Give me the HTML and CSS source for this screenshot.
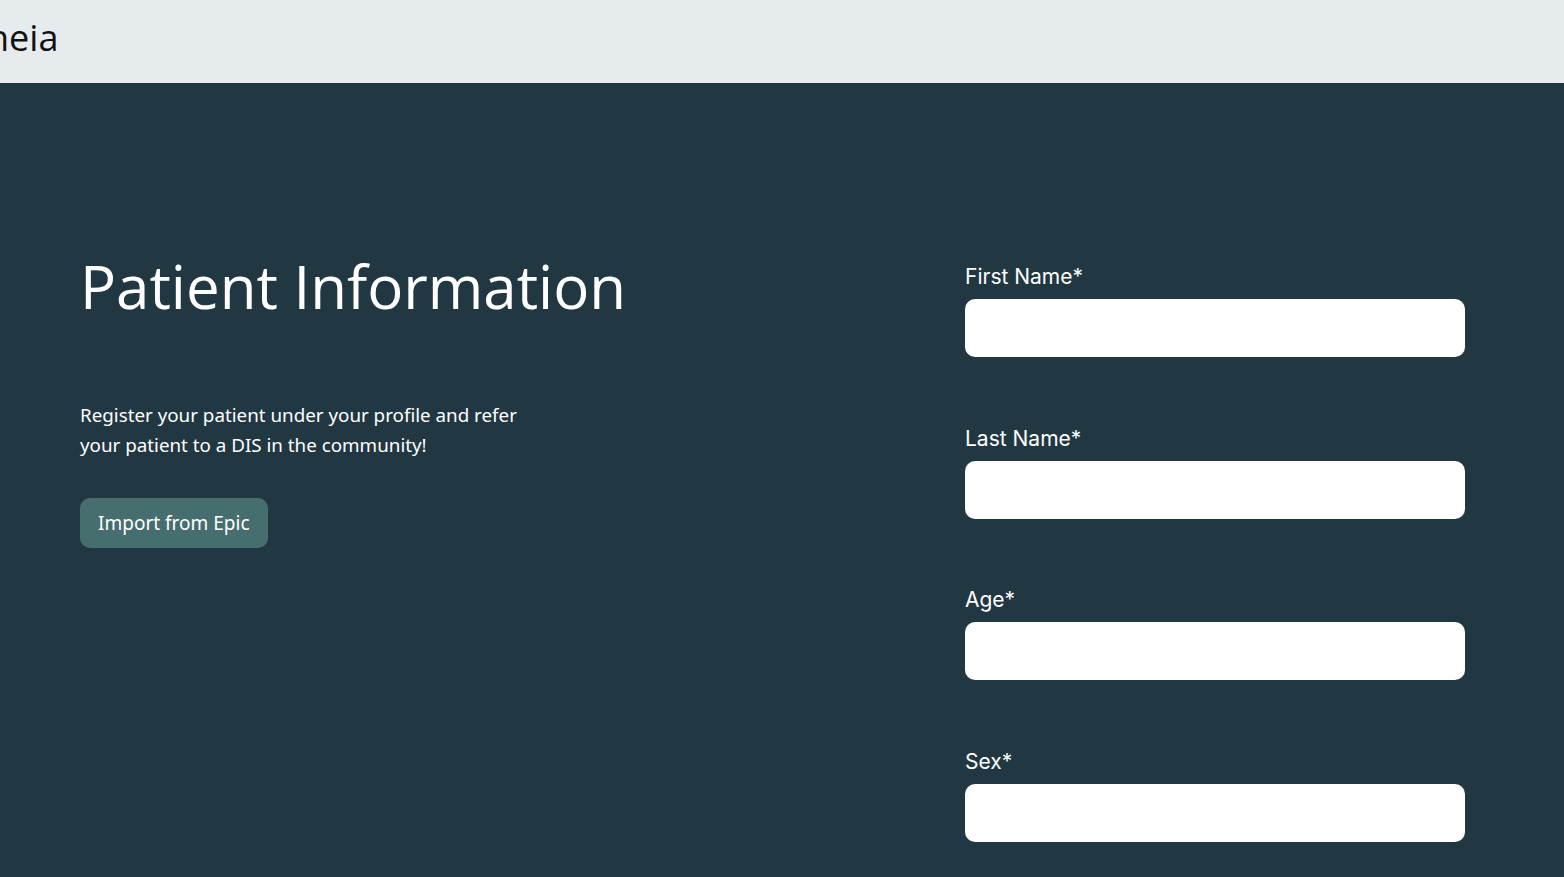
FILE: index.html
```html
<!DOCTYPE html>
<html lang="en">
<head>
<meta charset="utf-8">
<title>Patient Information</title>
<link rel="stylesheet" href="styles.css">
</head>
<body>
<header class="topbar">
  <div class="brand">neia</div>
</header>
<main class="page">
  <section class="intro">
    <h1 class="title">Patient Information</h1>
    <p class="lead">Register your patient under your profile and refer your patient to a DIS in the community!</p>
    <button class="import-btn" type="button">Import from Epic</button>
  </section>
  <form class="form">
    <label class="field">
      <span class="field-label">First Name*</span>
      <input class="field-input" type="text">
    </label>
    <label class="field">
      <span class="field-label">Last Name*</span>
      <input class="field-input" type="text">
    </label>
    <label class="field">
      <span class="field-label">Age*</span>
      <input class="field-input" type="text">
    </label>
    <label class="field">
      <span class="field-label">Sex*</span>
      <input class="field-input" type="text">
    </label>
  </form>
</main>
</body>
</html>
```
FILE: styles.css
```css
* { box-sizing: border-box; }
html, body { margin: 0; padding: 0; }
body {
  background: #213843;
  font-family: "Noto Sans", "Open Sans", sans-serif;
  color: #ffffff;
  overflow: hidden;
  height: 877px;
}
.topbar {
  height: 83px;
  background: #e6ebee;
  display: flex;
  align-items: center;
  overflow: hidden;
}
.brand {
  margin-left: -13px;
  font-family: "Open Sans", sans-serif;
  font-size: 36px;
  color: #111;
  line-height: 1;
  margin-top: -8px;
}
.page {
  display: grid;
  grid-template-columns: 1fr 500px;
  padding: 181px 99px 0 80px;
}
.title {
  margin: -18px 0 0;
  font-family: "Open Sans", sans-serif;
  font-weight: 400;
  font-size: 60px;
  line-height: 80px;
  letter-spacing: 0;
}
.lead {
  margin: 74px 0 0;
  max-width: 460px;
  font-size: 18.8px;
  line-height: 30px;
}
.import-btn {
  margin-top: 38px;
  height: 50px;
  padding: 0 18px;
  border: 0;
  border-radius: 10px;
  background: #466e6f;
  color: #fff;
  font-family: "Noto Sans", sans-serif;
  font-size: 19px;
}
.form {
  display: flex;
  flex-direction: column;
  gap: 68.6px;
}
.field {
  display: flex;
  flex-direction: column;
  gap: 11px;
}
.field-label {
  font-family: Inter, sans-serif;
  font-size: 21px;
  line-height: 24px;
  padding-top: 1px;
  margin-bottom: -1px;
}
.field-input {
  height: 58px;
  border: 0;
  border-radius: 10px;
  background: #fff;
  width: 100%;
}
```
